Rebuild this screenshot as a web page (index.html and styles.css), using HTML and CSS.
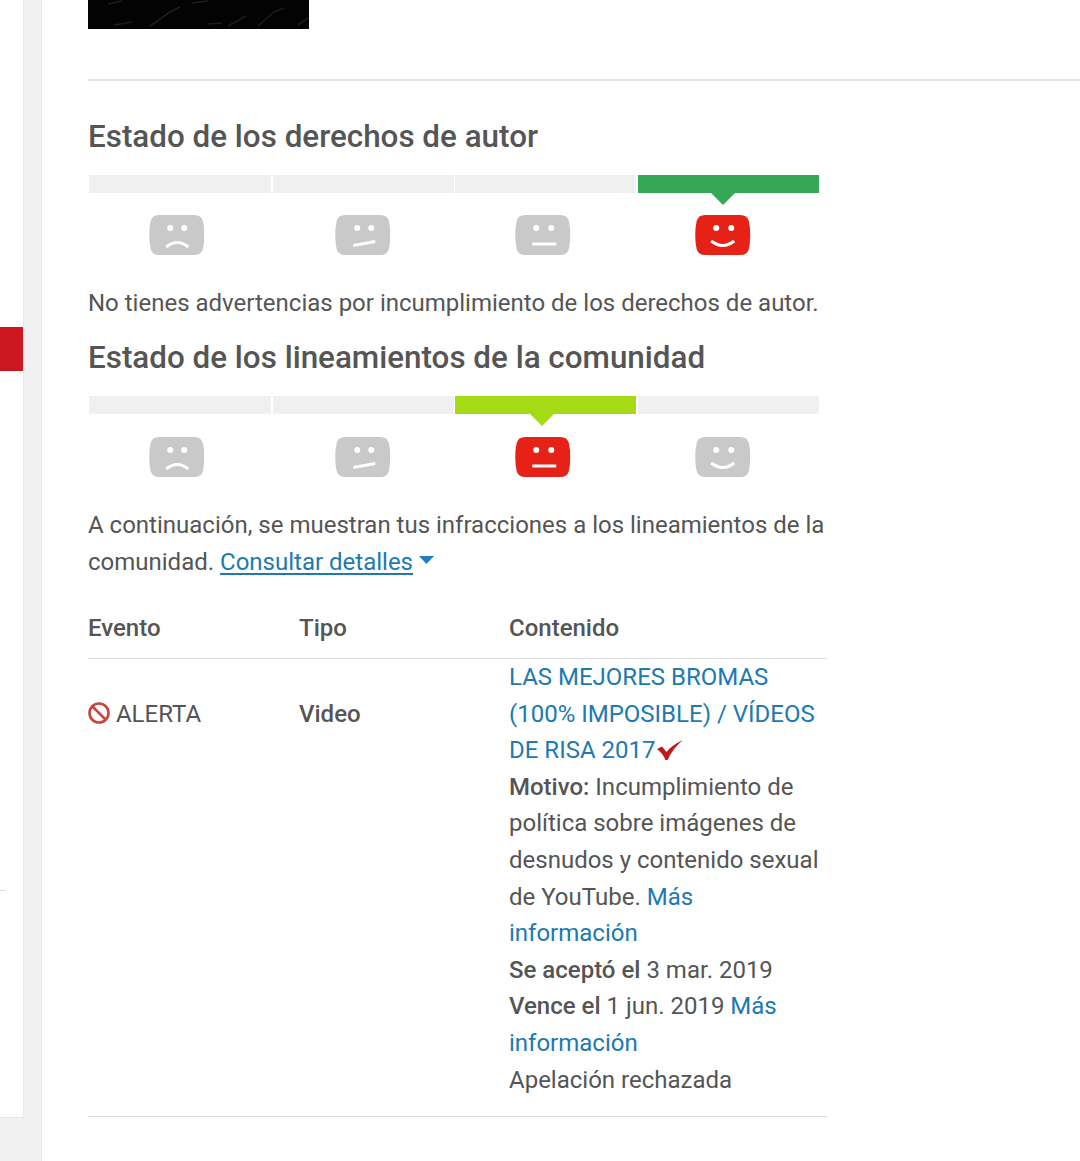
FILE: index.html
```html
<!DOCTYPE html>
<html lang="es">
<head>
<meta charset="utf-8">
<title>Estado de la cuenta</title>
<link rel="stylesheet" href="styles.css">
</head>
<body>
<svg class="defs" width="0" height="0" aria-hidden="true">
  <defs>
    <path id="plate" d="M10 0H45Q52 0 53.6 6Q55 12 55 20Q55 28 53.6 34Q52 40 45 40H10Q3 40 1.4 34Q0 28 0 20Q0 12 1.4 6Q3 0 10 0Z"/>
  </defs>
</svg>
<div class="page">
  <aside class="sidebar">
    <div class="side-active"></div>
    <div class="side-tick"></div>
  </aside>
  <main class="main">
    <div class="thumb">
      <svg class="thumb-art" viewBox="0 0 221 29" preserveAspectRatio="none" aria-hidden="true">
        <path d="M20 4L34 1M62 26L82 12L92 7M104 3L120 1M140 26L158 16M170 26L186 12L196 8M210 25L220 18M26 25L44 22M120 24L134 23" stroke="#1c1c1c" stroke-width="1.6" fill="none"/>
      </svg>
    </div>
    <hr class="rule">

    <section class="status">
      <h2 class="status-title">Estado de los derechos de autor</h2>
      <div class="meter">
        <div class="seg"></div><div class="seg"></div><div class="seg"></div>
        <div class="seg seg-green"></div>
      </div>
      <div class="faces">
        <svg class="face" viewBox="0 0 55 40"><use href="#plate"/><circle class="eye" cx="21" cy="13" r="3"/><circle class="eye" cx="35" cy="13" r="3"/><path class="mouth" d="M17 32Q28 23 39 32"/></svg>
        <svg class="face face-second" viewBox="0 0 55 40"><use href="#plate"/><circle class="eye" cx="22" cy="13" r="3"/><circle class="eye" cx="36" cy="13" r="3"/><path class="mouth" d="M18 30.500L40 26.500"/></svg>
        <svg class="face" viewBox="0 0 55 40"><use href="#plate"/><circle class="eye" cx="21" cy="13" r="3"/><circle class="eye" cx="36" cy="13" r="3"/><path class="mouth" d="M17 29H41"/></svg>
        <svg class="face face-on" viewBox="0 0 55 40"><use href="#plate"/><circle class="eye" cx="21" cy="13" r="3"/><circle class="eye" cx="36" cy="13" r="3"/><path class="mouth" d="M16 26Q27.500 35 39 26"/></svg>
      </div>
      <p class="status-text">No tienes advertencias por incumplimiento de los derechos de autor.</p>
    </section>

    <section class="status">
      <h2 class="status-title">Estado de los lineamientos de la comunidad</h2>
      <div class="meter">
        <div class="seg"></div><div class="seg"></div>
        <div class="seg seg-lime"></div>
        <div class="seg"></div>
      </div>
      <div class="faces">
        <svg class="face" viewBox="0 0 55 40"><use href="#plate"/><circle class="eye" cx="21" cy="13" r="3"/><circle class="eye" cx="35" cy="13" r="3"/><path class="mouth" d="M17 32Q28 23 39 32"/></svg>
        <svg class="face face-second" viewBox="0 0 55 40"><use href="#plate"/><circle class="eye" cx="22" cy="13" r="3"/><circle class="eye" cx="36" cy="13" r="3"/><path class="mouth" d="M18 30.500L40 26.500"/></svg>
        <svg class="face face-on" viewBox="0 0 55 40"><use href="#plate"/><circle class="eye" cx="21" cy="13" r="3"/><circle class="eye" cx="36" cy="13" r="3"/><path class="mouth" d="M17 29H41"/></svg>
        <svg class="face" viewBox="0 0 55 40"><use href="#plate"/><circle class="eye" cx="21" cy="13" r="3"/><circle class="eye" cx="36" cy="13" r="3"/><path class="mouth" d="M16 26Q27.500 35 39 26"/></svg>
      </div>
      <p class="status-text status-text-wrap">A continuación, se muestran tus infracciones a los lineamientos de la comunidad. <a class="link link-under" href="#">Consultar detalles</a> <svg class="caret" viewBox="0 0 15 8" aria-hidden="true"><path d="M0 0H15L7.500 8Z"/></svg></p>
    </section>

    <table class="events">
      <thead>
        <tr>
          <th class="col-event">Evento</th>
          <th class="col-type">Tipo</th>
          <th class="col-content">Contenido</th>
        </tr>
      </thead>
      <tbody>
        <tr>
          <td class="cell-offset"><svg class="ban" viewBox="0 0 22 22" aria-hidden="true"><circle cx="11" cy="11" r="9.500"/><path d="M4.500 4.500L17.500 17.500"/></svg> ALERTA</td>
          <td class="cell-offset cell-strong">Video</td>
          <td>
            <a class="link" href="#">LAS MEJORES BROMAS (100% IMPOSIBLE) / VÍDEOS DE RISA 2017</a><svg class="check" viewBox="0 0 26 20" aria-hidden="true"><path d="M0 9L5 6.500L9.500 12Q15 5 26 0Q16 8 10.500 20H8.500Q5.500 13 0 9Z"/></svg><br>
            <strong>Motivo:</strong> Incumplimiento de política sobre imágenes de desnudos y contenido sexual de YouTube. <a class="link" href="#">Más información</a><br>
            <strong>Se aceptó el</strong> 3 mar. 2019<br>
            <strong>Vence el</strong> 1 jun. 2019 <a class="link" href="#">Más información</a><br>
            Apelación rechazada
          </td>
        </tr>
      </tbody>
    </table>
  </main>
</div>
</body>
</html>
```

FILE: styles.css
```css
* { box-sizing: border-box; }

html, body {
  margin: 0;
  height: 100%;
  overflow: hidden;
}

body {
  background: #f1f1f1;
  color: #555;
  font-family: Roboto, "Liberation Sans", sans-serif;
  font-size: 24px;
  line-height: 36.6px;
}

.defs { display: block; height: 0; }

.page {
  display: flex;
  gap: 18px;
  height: 1161px;
}

.sidebar {
  flex: 0 0 23px;
  height: 1118px;
  padding-top: 327px;
  background: #fff;
  border-bottom: 1px solid #e6e6e6;
  box-shadow: 1px 0 0 #e9e9e9;
}

.side-active {
  width: 23px;
  height: 44px;
  background: #cc1620;
}

.side-tick {
  width: 5px;
  height: 1px;
  margin-top: 519px;
  background: #d8d8d8;
}

.main {
  flex: 1;
  min-width: 0;
  padding-left: 46px;
  background: #fff;
  border-left: 1px solid #e8e8e8;
}

.thumb {
  width: 221px;
  height: 29px;
  background: #030303;
}

.thumb-art {
  display: block;
  width: 100%;
  height: 100%;
}

.rule {
  height: 2px;
  margin: 50px 0 0;
  border: 0;
  background: #e2e2e2;
}

.status-title {
  margin: 0;
  font-size: 31.4px;
  font-weight: 500;
  line-height: 40px;
}

.status:first-of-type .status-title { margin-top: 36px; }

.meter {
  display: grid;
  grid-template-columns: 182px 181px 181px 181px;
  gap: 1.67px;
  width: 730px;
  margin: 18px 0 0 1px;
}

.seg {
  position: relative;
  height: 18px;
  background: #f0f0f0;
}

.seg-green { background: #34a856; }
.seg-lime { background: #a5db15; }

.seg-green::after,
.seg-lime::after {
  content: "";
  position: absolute;
  top: 18px;
  border-style: solid;
  border-width: 12px 12.5px 0;
}

.seg-green::after { left: 73px; border-color: #34a856 transparent transparent; }
.seg-lime::after { left: 75px; border-color: #a5db15 transparent transparent; }

.faces {
  display: flex;
  gap: 124.5px;
  margin: 22px 0 0 60.5px;
}

.face {
  display: block;
  flex: 0 0 55.5px;
  height: 40px;
  fill: #c9c9c9;
}

.face-second { margin-left: 6.5px; }
.face-on { fill: #e62117; }

.eye { fill: #fff; }

.mouth {
  fill: none;
  stroke: #fff;
  stroke-width: 3;
}

.status-text {
  width: 740px;
  margin: 30px 0 0;
}

.status + .status .status-title { margin-top: 16px; }
.status + .status .meter { margin-top: 18.5px; }
.status + .status .faces { margin-top: 22.5px; }

.status-text-wrap { margin-top: 30.6px !important; }

.link {
  color: #2079b0;
  text-decoration: none;
}

.link-under { text-decoration: underline; text-underline-offset: 3px; }

.caret {
  display: inline-block;
  width: 15px;
  height: 8px;
  margin-bottom: 6px;
  fill: #1f7fc4;
}

.events {
  width: 739px;
  margin-top: 29.4px;
  border-collapse: collapse;
  table-layout: fixed;
}

.events th {
  padding: 0 0 11.7px;
  border-bottom: 1px solid #dcdcdc;
  font-weight: 500;
  text-align: left;
}

.col-event { width: 211px; }
.col-type { width: 210px; }

.events td {
  padding: 0 0 18.3px;
  border-bottom: 1px solid #dcdcdc;
  vertical-align: top;
}

.cell-offset { padding-top: 36.6px !important; }
.cell-strong { font-weight: 500; }

.events strong { font-weight: 500; }

.ban {
  display: inline-block;
  width: 22px;
  height: 22px;
  margin-bottom: -2px;
  fill: none;
  stroke: #c8443c;
  stroke-width: 2.6;
}

.check {
  display: inline-block;
  width: 26px;
  height: 20px;
  margin: 0 0 -2px 2px;
  fill: #bf1a1a;
}
```
